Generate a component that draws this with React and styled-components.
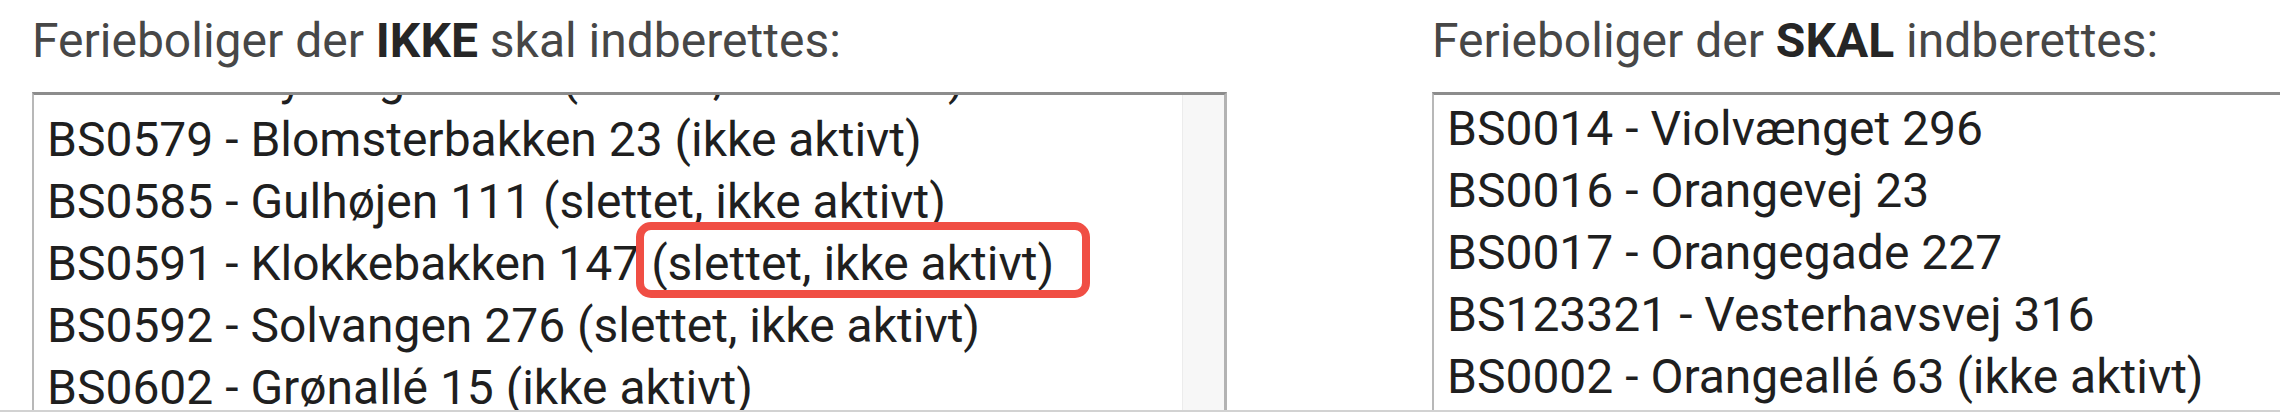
import React, { useLayoutEffect, useRef } from "react";
import styled, { createGlobalStyle } from "styled-components";

const Global = createGlobalStyle`
  html, body {
    margin: 0;
    padding: 0;
    background: #ffffff;
    overflow: hidden;
    width: 2280px;
    height: 414px;
  }
  body {
    font-family: Roboto, "Liberation Sans", Arial, sans-serif;
  }
`;

const Page = styled.div`
  display: flex;
  flex-direction: row;
  gap: 205px;
  padding: 13px 0 0 32px;
  height: 412px;
  box-sizing: border-box;
  border-bottom: 2px solid #d2d2d2;
  width: 2280px;
  overflow: hidden;
`;

const Column = styled.section`
  display: flex;
  flex-direction: column;
  width: 1195px;
  flex-shrink: 0;
  min-height: 0;
`;

const Title = styled.div`
  font-size: 48px;
  line-height: 56px;
  color: #474747;
  white-space: nowrap;
  margin-bottom: 23px;

  b {
    font-weight: 700;
    color: #262626;
  }
`;

const ListBox = styled.div`
  flex: 1;
  min-height: 0;
  display: flex;
  flex-direction: row;
  background: #ffffff;
  border-top: 3px solid #8c8c8c;
  border-left: 2px solid #b8b8b8;
  border-right: 3px solid #b3b3b3;
  box-sizing: border-box;
`;

const Options = styled.div`
  flex: 1;
  min-width: 0;
  overflow: hidden;
  padding-top: 3px;
`;

const Option = styled.div`
  font-size: 48px;
  line-height: 62px;
  height: 62px;
  color: #1f1f1f;
  padding-left: 13px;
  white-space: nowrap;
`;

const Track = styled.div`
  width: 41px;
  flex-shrink: 0;
  background: #f7f7f7;
  border-left: 1px solid #ececec;
`;

const Marked = styled.span`
  position: relative;

  &::after {
    content: "";
    position: absolute;
    top: -13px;
    bottom: -6px;
    left: -15px;
    right: -36px;
    border: 8px solid #f04e44;
    border-radius: 15px;
    pointer-events: none;
  }
`;

const notReported = [
  { code: "BS0577", name: "Ryvangen 142", status: "(slettet, ikke aktivt)" },
  { code: "BS0579", name: "Blomsterbakken 23", status: "(ikke aktivt)" },
  { code: "BS0585", name: "Gulhøjen 111", status: "(slettet, ikke aktivt)" },
  { code: "BS0591", name: "Klokkebakken 147", status: "(slettet, ikke aktivt)", marked: true },
  { code: "BS0592", name: "Solvangen 276", status: "(slettet, ikke aktivt)" },
  { code: "BS0602", name: "Grønallé 15", status: "(ikke aktivt)" },
  { code: "BS0605", name: "Grønningen 8", status: "(ikke aktivt)" },
];

const reported = [
  { code: "BS0014", name: "Violvænget 296" },
  { code: "BS0016", name: "Orangevej 23" },
  { code: "BS0017", name: "Orangegade 227" },
  { code: "BS123321", name: "Vesterhavsvej 316" },
  { code: "BS0002", name: "Orangeallé 63", status: "(ikke aktivt)" },
  { code: "BS0003", name: "Orangehaven 12" },
];

function Row({ item }) {
  return (
    <Option>
      {item.code} - {item.name}
      {item.status ? " " : null}
      {item.status ? (item.marked ? <Marked>{item.status}</Marked> : item.status) : null}
    </Option>
  );
}

export default function App() {
  const leftRef = useRef(null);
  useLayoutEffect(() => {
    if (leftRef.current) leftRef.current.scrollTop = 51;
  }, []);

  return (
    <>
      <Global />
      <Page>
        <Column>
          <Title>
            Ferieboliger der <b>IKKE</b> skal indberettes:
          </Title>
          <ListBox>
            <Options ref={leftRef}>
              {notReported.map((it) => (
                <Row key={it.code} item={it} />
              ))}
            </Options>
            <Track />
          </ListBox>
        </Column>
        <Column>
          <Title>
            Ferieboliger der <b>SKAL</b> indberettes:
          </Title>
          <ListBox>
            <Options>
              {reported.map((it) => (
                <Row key={it.code} item={it} />
              ))}
            </Options>
          </ListBox>
        </Column>
      </Page>
    </>
  );
}
